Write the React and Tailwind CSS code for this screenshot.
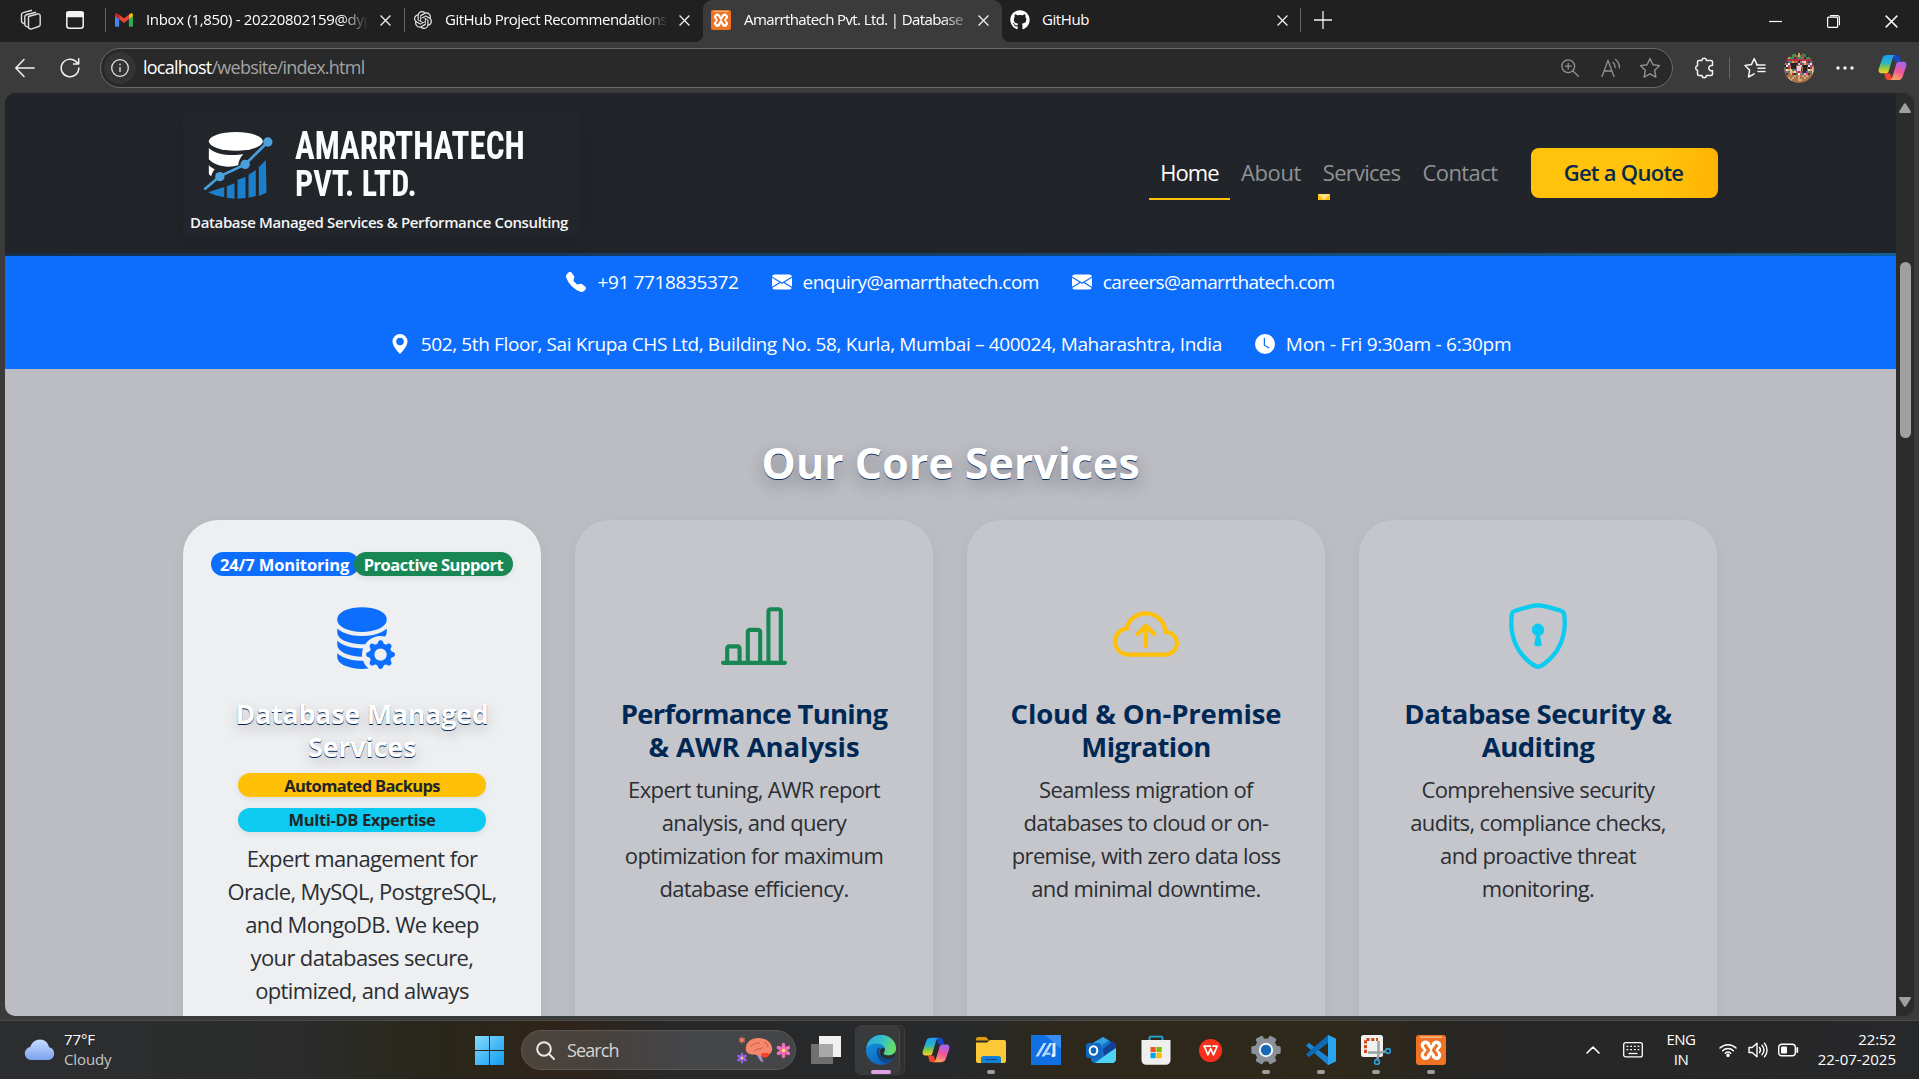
import React from 'react';
import {
  BsDatabaseFillGear,
  BsBarChartLine,
  BsCloudArrowUp,
  BsShieldLock,
  BsTelephoneFill,
  BsEnvelopeFill,
  BsGeoAltFill,
  BsClockFill,
} from 'react-icons/bs';
import { FaGithub } from 'react-icons/fa';
import { SiOpenai } from 'react-icons/si';

/* ---------- shared drawings ---------- */

function CloseX({ className = 'size-[11px]' }) {
  return (
    <svg viewBox="0 0 12 12" className={className} fill="none" stroke="#f2f2f2" strokeWidth="1.4">
      <path d="M.6.6l10.8 10.8M11.4.6L.6 11.4" />
    </svg>
  );
}

function Xampp({ className }) {
  return (
    <svg viewBox="0 0 30 30" className={className}>
      <rect width="30" height="30" rx="3" fill="#ee7324" />
      <path d="M4 2.2h22" stroke="#f9b585" strokeWidth="1.6" />
      <g fill="none" strokeLinecap="round">
        <path d="M9.5 10.3L20.5 20.3M20.5 10.3L9.5 20.3" stroke="#fff" strokeWidth="9.6" />
        <path d="M9.6 10.5v.6l3 4-3 4v.8M20.4 10.5v.6l-3 4 3 4v.8" stroke="#ee7324" strokeWidth="3.2" strokeLinejoin="round" />
        <path d="M15 4.5v5M15 21v5" stroke="#ee7324" strokeWidth="1.6" />
      </g>
    </svg>
  );
}

function Copilot({ className, id }) {
  return (
    <svg viewBox="0 0 30 30" className={className}>
      <defs>
        <linearGradient id={id + 'a'} x1="0" y1="0" x2="0" y2="1">
          <stop offset="0" stopColor="#1b9bf0" />
          <stop offset=".45" stopColor="#2fb4c4" />
          <stop offset=".7" stopColor="#8fc93a" />
          <stop offset="1" stopColor="#ffd02e" />
        </linearGradient>
        <linearGradient id={id + 'b'} x1=".6" y1="0" x2=".3" y2="1">
          <stop offset="0" stopColor="#a463f2" />
          <stop offset=".5" stopColor="#f0569a" />
          <stop offset="1" stopColor="#ffa45c" />
        </linearGradient>
      </defs>
      <path d="M16 2h3.5c1.6 0 2.6 1 3 2.600L23.700 9h-6L15.500 3z" fill="#1747c9" />
      <path d="M14 28h-3.500c-1.600 0-2.600-1-3-2.600L6.500 21h6l2 6z" fill="#f0442e" />
      <path d="M9.500 2h8.300c-1.500.6-2.200 1.700-2.700 3.400l-4 13.200c-.5 1.700-1.500 2.400-3 2.400H4c-3 0-3.900-2.200-3.200-4.800L4.500 5.500C5.200 3.200 6.800 2 9.500 2z" fill={`url(#${id}a)`} />
      <path d="M20.500 28h-8.300c1.500-.6 2.200-1.700 2.700-3.400l4-13.200c.5-1.700 1.500-2.400 3-2.400H26c3 0 3.900 2.200 3.200 4.800l-3.700 10.700c-.7 2.300-2.300 3.500-5 3.500z" fill={`url(#${id}b)`} />
    </svg>
  );
}

/* ---------- browser tab strip ---------- */

function TabDivider() {
  return <div className="h-6 w-px bg-[#666]" />;
}

function TabStrip() {
  return (
    <div className="flex h-[42px] items-start bg-[#202020]">
      <div className="flex h-10 w-[105px] items-center gap-6 pl-5">
        <svg viewBox="0 0 22 22" className="size-[22px]" fill="none" stroke="#dedede" strokeWidth="1.4" strokeLinejoin="round">
          <path d="M8.500 7.500l9-2.500c1.600-.4 2.700.4 2.700 2v8.500c0 1-.5 1.700-1.500 2l-7 2.400c-1.700.5-3.200-.4-3.200-2z" />
          <path d="M8.500 18.500l-2.700-1.400c-.8-.5-1-1-1-1.800V8c0-1.200.6-2 1.700-2.300L16 3.200" />
          <path d="M5 15.200l-2.500-1.400c-.8-.4-1-1-1-1.700V5.800c0-1.200.6-1.900 1.700-2.200L12 1.200" />
        </svg>
        <svg viewBox="0 0 18 18" className="size-[18px]" fill="none" stroke="#f2f2f2" strokeWidth="1.500">
          <rect x=".8" y=".8" width="16.400" height="16.400" rx="2.500" />
          <path d="M1 1.500h16v4H1z" fill="#f2f2f2" />
        </svg>
      </div>
      <div className="flex h-10 items-center">
        <TabDivider />
        <div className="flex w-[298px] items-center pl-[9px]">
          <svg viewBox="0 0 24 18" className="h-[14px] w-[18px] shrink-0">
            <path d="M0 3v13.500C0 17.300.7 18 1.500 18H5.500V7z" fill="#4285f4" />
            <path d="M24 3v13.500c0 .8-.7 1.500-1.500 1.500H18.500V7z" fill="#34a853" />
            <path d="M18.500 2v6L24 3.500V2.200C24 .3 21.800-.6 20.300.5z" fill="#fbbc04" />
            <path d="M5.500 8V2L12 6.800 18.500 2v6L12 13z" fill="#ea4335" />
            <path d="M0 2.200v1.500L5.500 8V2L3.700.5C2.200-.6 0 .3 0 2.200z" fill="#c5221f" />
          </svg>
          <div className="ml-[13px] w-[222px] overflow-hidden pb-0.5 text-[15px] whitespace-nowrap tracking-[-0.022em] text-white [mask-image:linear-gradient(to_right,black_88%,transparent)]">
            Inbox (1,850) - 20220802159@dyp
          </div>
          <CloseX className="ml-3 size-[11px]" />
        </div>
        <TabDivider />
        <div className="flex w-[298px] items-center pl-[9px]">
          <SiOpenai className="size-[18px] shrink-0 text-[#e8e8e8]" />
          <div className="ml-[13px] w-[223px] overflow-hidden pb-0.5 text-[15px] whitespace-nowrap tracking-[-0.0345em] text-white [mask-image:linear-gradient(to_right,black_88%,transparent)]">
            GitHub Project Recommendations
          </div>
          <CloseX className="ml-[11px] size-[11px]" />
        </div>
      </div>
      <div className="relative flex h-[42px] w-[299px] items-center rounded-t-[9px] bg-[#3b3b3b] pb-0.5 pl-2">
        <div className="absolute bottom-0 -left-2 size-2 bg-[radial-gradient(circle_at_0_0,#202020_8px,#3b3b3b_8px)]" />
        <div className="absolute -right-2 bottom-0 size-2 bg-[radial-gradient(circle_at_100%_0,#202020_8px,#3b3b3b_8px)]" />
        <Xampp className="size-5 shrink-0" />
        <div className="ml-[13px] w-[220px] overflow-hidden pb-0.5 text-[15px] whitespace-nowrap tracking-[-0.0404em] text-white [mask-image:linear-gradient(to_right,black_90%,rgba(0,0,0,0.3))]">
          Amarrthatech Pvt. Ltd. | Database
        </div>
        <CloseX className="ml-[14px] size-[11px]" />
      </div>
      <div className="flex h-10 items-center">
        <div className="flex w-[298px] items-center pl-2">
          <FaGithub className="size-5 shrink-0 text-white" />
          <div className="ml-3 w-[235px] pb-0.5 text-[15px] tracking-[-0.0278em] text-white">GitHub</div>
          <CloseX className="size-[11px]" />
        </div>
        <TabDivider />
        <svg viewBox="0 0 18 18" className="ml-[13px] size-[18px]" stroke="#f2f2f2" strokeWidth="1.300">
          <path d="M9 0v18M0 9h18" />
        </svg>
      </div>
      <div className="mr-[21px] ml-auto flex h-[42px] items-center gap-[45px]">
        <svg viewBox="0 0 13 13" className="size-[13px]" stroke="#fff" strokeWidth="1.200">
          <path d="M0 6.500h13" />
        </svg>
        <svg viewBox="0 0 13 13" className="size-[13px]" fill="none" stroke="#fff" strokeWidth="1.200">
          <rect x=".6" y="2.200" width="10" height="10.200" rx="1" />
          <path d="M3 .6h7.400c1.200 0 2 .8 2 2v7.600" />
        </svg>
        <CloseX className="size-[13px]" />
      </div>
    </div>
  );
}

/* ---------- browser toolbar ---------- */

const speckColors = ['#3f8f56', '#d8486a', '#32242c', '#dcc0bf', '#b52f45', '#6a60b8', '#e0a73c', '#a8744e', '#8f6f62', '#f0e3dc', '#5a2f3a'];

function Avatar() {
  const cells = [];
  for (let y = 0; y < 15; y += 1) {
    for (let x = 0; x < 15; x += 1) {
      const n = (x * 37 + y * 61 + x * y * 17 + y * y * 7) % 11;
      const fill = y < 3 && n % 2 ? '#3f8f56' : y > 10 ? (n % 3 ? '#a8744e' : '#d9a878') : speckColors[n];
      cells.push(<rect key={x + '-' + y} x={x * 2} y={y * 2} width="2.100" height="2.100" fill={fill} />);
    }
  }
  return (
    <svg viewBox="0 0 30 30" className="ml-[18px] size-[30px] shrink-0">
      <defs>
        <clipPath id="face">
          <circle cx="15" cy="15" r="15" />
        </clipPath>
      </defs>
      <g clipPath="url(#face)">
        {cells}
        <path d="M7 10h5v6H7zM19 12h4v6h-4z" fill="#2b1f26" />
        <path d="M13 13h4v5h-4z" fill="#e6cfcd" />
      </g>
    </svg>
  );
}

function Toolbar() {
  return (
    <div className="flex h-[51px] items-center bg-[#3b3b3b] pl-[15px]">
      <svg viewBox="0 0 20 20" className="size-5 shrink-0" fill="none" stroke="#f2f2f2" strokeWidth="1.500" strokeLinecap="round" strokeLinejoin="round">
        <path d="M19.200 10H.8M9 1.500L.8 10 9 18.500" />
      </svg>
      <svg viewBox="0 0 20 20" className="ml-[25px] size-5 shrink-0" fill="none" stroke="#f2f2f2" strokeWidth="1.500" strokeLinecap="round" strokeLinejoin="round">
        <path d="M18.800 10a8.800 8.800 0 1 1-3-6.600L18.500 6M18.700.8V6h-5.200" />
      </svg>
      <div className="ml-5 flex h-10 w-[1573px] shrink-0 items-center rounded-full border border-[#6a6a6a] bg-[#292929] pr-[11px] pl-[3px]">
        <div className="flex size-8 items-center justify-center rounded-full bg-[#343434]">
          <svg viewBox="0 0 18 18" className="size-[18px]" fill="none" stroke="#e6e6e6" strokeWidth="1.300">
            <circle cx="9" cy="9" r="8.300" />
            <path d="M9 8v5M9 4.800v1.500" />
          </svg>
        </div>
        <div className="ml-[7px] text-[18px] tracking-[-0.0425em] text-[#a3a3a3]">
          <span className="text-white">localhost</span>/website/index.html
        </div>
        <div className="ml-auto flex items-center text-[#929292]">
          <svg viewBox="0 0 18 18" className="size-[18px]" fill="none" stroke="currentColor" strokeWidth="1.300" strokeLinecap="round">
            <circle cx="7.200" cy="7.200" r="6.400" />
            <path d="M12 12l5.300 5.300M7.200 4.200v6M4.200 7.200h6" />
          </svg>
          <svg viewBox="0 0 20 20" className="ml-[22px] size-5" fill="none" stroke="currentColor" strokeWidth="1.300" strokeLinecap="round">
            <path d="M1 18.500L7 2.500l6 16M3.200 13h7.600M12 4.500c1.500 1.200 2.300 3 2.300 5M14.500 1.500c2.600 2 4 5 4 8.300" />
          </svg>
          <svg viewBox="0 0 22 22" className="ml-[18px] size-[22px]" fill="none" stroke="currentColor" strokeWidth="1.400" strokeLinejoin="round">
            <path d="M11 1.500l2.900 6.200 6.700.9-4.900 4.700 1.200 6.800L11 16.800l-5.900 3.300 1.200-6.800L1.400 8.600l6.700-.9z" />
          </svg>
        </div>
      </div>
      <svg viewBox="0 0 20 22" className="ml-[21px] h-[22px] w-5 shrink-0" fill="none" stroke="#f2f2f2" strokeWidth="1.500" strokeLinejoin="round">
        <path d="M8 3.500a2.200 2.200 0 0 1 4.400 0H17a1.500 1.500 0 0 1 1.500 1.500v3.600a2.700 2.700 0 1 0 0 5V17a1.500 1.500 0 0 1-1.500 1.500h-4.600a2.200 2.200 0 0 1-4.400 0H5A1.500 1.500 0 0 1 3.500 17v-3.800a2.300 2.300 0 0 1 0-4.500V5A1.500 1.500 0 0 1 5 3.500z" />
      </svg>
      <div className="ml-[15px] h-[22px] w-px bg-[#666]" />
      <svg viewBox="0 0 22 22" className="ml-[14px] size-[22px] shrink-0" fill="none" stroke="#f2f2f2" strokeWidth="1.500" strokeLinejoin="round" strokeLinecap="round">
        <path d="M14 7.800l-1-.2-2.800-6-2.800 6-6.400.9 4.600 4.600L4.500 20l5.700-3.200M12.500 8h8.500M14 11.300h7M14 14.500h7" />
      </svg>
      <Avatar />
      <svg viewBox="0 0 20 4" className="ml-[21px] h-1 w-5 shrink-0" fill="#f2f2f2">
        <circle cx="3" cy="2" r="1.700" />
        <circle cx="10" cy="2" r="1.700" />
        <circle cx="17" cy="2" r="1.700" />
      </svg>
      <Copilot id="cpTop" className="ml-[23px] size-[29px] shrink-0" />
    </div>
  );
}

/* ---------- site header ---------- */

function Logo() {
  return (
    <div className="h-[125px] w-[398px] rounded bg-[#22252a] pt-[16px] shadow-[0_4px_18px_rgba(0,0,0,0.14)]">
      <div className="flex h-[74px] pl-5">
        <svg viewBox="98 106 212 210" className="mt-[3px] h-[70px] w-[71px] shrink-0">
          <ellipse cx="196" cy="140" rx="81" ry="28" fill="#fff" />
          <path d="M115 160c22 24 78 24 104 18-10 10-14 20-16 34-36 10-72 0-88-18z" fill="#fff" />
          <path d="M115 211c5 6 11 10 18 13-6 6-9 12-11 21-4-3-7-6-7-10z" fill="#fff" />
          <g fill="#1c7fcb">
            <path d="M113 293l48-16v31c-20-3-36-8-48-15z" />
            <path d="M169 275l23-9v46l-23-3z" />
            <path d="M201 255l24-8v63l-24 2z" />
            <path d="M234 240l22-14v78l-22 5z" />
            <path d="M265 218l21-22 2 98-23 10z" />
          </g>
          <path d="M104 282l44-37 76-36 68-67" fill="none" stroke="#4aa0dd" strokeWidth="8" strokeLinecap="round" />
          <g fill="#4aa0dd">
            <circle cx="148" cy="246" r="14" />
            <circle cx="224" cy="209" r="14" />
            <circle cx="292" cy="142" r="14" />
          </g>
        </svg>
        <div className="ml-[21px] font-['Roboto_Condensed'] font-bold whitespace-nowrap text-[#fafcfd]">
          <div className="h-[37px] w-fit origin-left scale-x-[0.835] text-[39.500px] leading-[37px]">AMARRTHATECH</div>
          <div className="h-[37px] w-fit origin-left scale-x-[0.89] text-[36px] leading-[40px]">PVT. LTD.</div>
        </div>
      </div>
      <div className="mt-[10px] pl-[7px] text-[15px] leading-[22px] font-semibold tracking-[-0.024em] whitespace-nowrap text-[#f4f6f7]">
        Database Managed Services &amp; Performance Consulting
      </div>
    </div>
  );
}

function SiteHeader() {
  return (
    <header className="flex h-[163px] items-center border-b-[3px] border-[#134473] bg-[#212529] pr-[178px] pl-[178px] [border-image:linear-gradient(to_right,#15304f,#12406f_50%,#105f98)_1]">
      <Logo />
      <nav className="ml-auto flex items-center text-[22px] leading-[33px] text-[#909294]">
        <div className="flex h-[54px] w-[81px] items-center justify-center border-b-2 border-[#ffc107] tracking-[-0.04em] text-white">Home</div>
        <div className="w-[82px] pb-0.5 text-center tracking-[-0.018em]">About</div>
        <div className="relative w-[99px] pb-0.5 text-center tracking-[-0.034em]">
          Services
          <svg viewBox="0 0 12 6" className="absolute top-[38px] left-[6px] h-1.5 w-3">
            <path d="M0 0h12v6H0z" fill="#ffc107" />
            <path d="M0 0h12L6 6z" fill="#ffe083" />
          </svg>
        </div>
        <div className="w-[98px] pb-0.5 text-center tracking-[-0.026em]">Contact</div>
      </nav>
      <button className="ml-[22px] h-[50px] w-[187px] rounded-[8px] bg-[linear-gradient(100deg,#ffc30b_65%,#ffb300)] pr-0.5 pb-0.5 text-[22px] font-semibold tracking-[-0.033em] text-[#0a2a4d]">
        Get a Quote
      </button>
    </header>
  );
}

function ContactItem({ icon: Icon, children, className }) {
  return (
    <div className="flex items-center">
      <Icon className="mr-[11px] size-5 shrink-0 -translate-y-px" />
      <span className={className}>{children}</span>
    </div>
  );
}

function ContactBar() {
  return (
    <div className="flex h-[113px] flex-col items-center bg-[#0d6efd] pt-3 text-[19px] whitespace-nowrap text-white">
      <div className="flex h-[29px] items-center gap-[33px]">
        <ContactItem icon={BsTelephoneFill} className="tracking-[-0.019em]">+91 7718835372</ContactItem>
        <ContactItem icon={BsEnvelopeFill} className="tracking-[-0.0285em]">enquiry@amarrthatech.com</ContactItem>
        <ContactItem icon={BsEnvelopeFill} className="tracking-[-0.034em]">careers@amarrthatech.com</ContactItem>
      </div>
      <div className="mt-[33px] flex h-[29px] items-center gap-[33px]">
        <ContactItem icon={BsGeoAltFill} className="tracking-[-0.0195em]">
          502, 5th Floor, Sai Krupa CHS Ltd, Building No. 58, Kurla, Mumbai – 400024, Maharashtra, India
        </ContactItem>
        <ContactItem icon={BsClockFill} className="tracking-[-0.0137em]">Mon - Fri 9:30am - 6:30pm</ContactItem>
      </div>
    </div>
  );
}

/* ---------- services ---------- */

function Lines({ lines, className }) {
  return (
    <div className={className}>
      {lines.map(([text, tracking]) => (
        <div key={text} className={tracking}>{text}</div>
      ))}
    </div>
  );
}

const services = [
  {
    icon: BsBarChartLine,
    color: 'text-[#198754]',
    title: [['Performance Tuning', 'tracking-[-0.0263em]'], ['& AWR Analysis', 'tracking-[-0.0026em]']],
    body: ['Expert tuning, AWR report', 'analysis, and query', 'optimization for maximum', 'database efficiency.'],
  },
  {
    icon: BsCloudArrowUp,
    color: 'text-[#ffc107]',
    title: [['Cloud & On-Premise', 'tracking-[-0.0051em]'], ['Migration', 'tracking-[-0.02em]']],
    body: ['Seamless migration of', 'databases to cloud or on-', 'premise, with zero data loss', 'and minimal downtime.'],
  },
  {
    icon: BsShieldLock,
    color: 'text-[#0dcaf0]',
    title: [['Database Security &', 'tracking-[-0.0172em]'], ['Auditing', 'tracking-[-0.02em]']],
    body: ['Comprehensive security', 'audits, compliance checks,', 'and proactive threat', 'monitoring.'],
  },
];

const bodyClass = 'text-[22px] leading-[33px] tracking-[-0.029em] text-[#2b2e33]';

function FeaturedCard() {
  return (
    <article className="relative h-[700px] w-[358px] shrink-0 rounded-[35px] bg-[#edeff1] pt-[83px] text-center whitespace-nowrap shadow-[0_4px_16px_rgba(0,0,0,0.05)]">
      <div className="absolute top-8 left-7 h-6 w-[148px] rounded-full bg-[#0d6efd] pl-[9px] text-left text-[16.500px] leading-[25px] font-bold tracking-[-0.0081em] text-white">
        24/7 Monitoring
      </div>
      <div className="absolute top-8 right-7 h-6 w-[159px] rounded-full bg-[#198754] text-[16.500px] leading-[25px] font-bold tracking-[-0.0296em] text-white shadow-[0_2px_6px_rgba(0,0,0,0.08)]">
        Proactive Support
      </div>
      <BsDatabaseFillGear className="mx-auto size-[66px] text-[#0d6efd]" />
      <Lines
        className="mt-7 text-[27px] leading-[33px] font-bold text-white [text-shadow:0_1px_0_#002855,0_5px_14px_rgba(40,30,50,0.22)]"
        lines={[['Database Managed', 'tracking-[-0.012em]'], ['Services', 'tracking-[-0.008em]']]}
      />
      <div className="mx-auto mt-[10px] h-6 w-[248px] rounded-full bg-[#ffc107] text-[16.500px] leading-[26px] font-bold tracking-[-0.0392em] text-[#212529] shadow-[0_2px_6px_rgba(0,0,0,0.08)]">
        Automated Backups
      </div>
      <div className="mx-auto mt-[11px] h-6 w-[248px] rounded-full bg-[#0dcaf0] text-[16.500px] leading-6 font-bold tracking-[-0.0212em] text-[#212529] shadow-[0_2px_6px_rgba(0,0,0,0.08)]">
        Multi-DB Expertise
      </div>
      <Lines
        className={bodyClass + ' mt-[10px]'}
        lines={[
          ['Expert management for'],
          ['Oracle, MySQL, PostgreSQL,'],
          ['and MongoDB. We keep'],
          ['your databases secure,'],
          ['optimized, and always'],
          ['available.'],
        ]}
      />
    </article>
  );
}

function ServiceCard({ icon: Icon, color, title, body }) {
  return (
    <article className="h-[700px] w-[358px] shrink-0 rounded-[35px] bg-[#c5c6cb] pt-[83px] text-center whitespace-nowrap shadow-[0_4px_16px_rgba(0,0,0,0.04)]">
      <Icon className={'mx-auto size-[66px] ' + color} />
      <Lines className="mt-7 text-[27.500px] leading-[33px] font-bold text-[#002855]" lines={title} />
      <Lines className={bodyClass + ' mt-[10px]'} lines={body.map((line) => [line])} />
    </article>
  );
}

function Services() {
  return (
    <section className="h-[647px] overflow-hidden bg-[#bcbdc3]">
      <h2 className="mt-[66px] text-center text-[43.500px] leading-[56px] font-bold tracking-[-0.006em] text-white [text-shadow:0_1px_0_#0d2f5c,0_6px_16px_rgba(30,30,50,0.3)]">
        Our Core Services
      </h2>
      <div className="mt-[29px] flex gap-[34px] pl-[178px]">
        <FeaturedCard />
        {services.map((service) => (
          <ServiceCard key={service.title[0][0]} {...service} />
        ))}
      </div>
    </section>
  );
}

function Scrollbar() {
  return (
    <div className="flex w-[18px] shrink-0 flex-col items-center bg-[#2c2c2c] pt-[10px] pb-[9px]">
      <svg viewBox="0 0 12 10" className="h-[10px] w-3" fill="#a0a0a0">
        <path d="M5 .8Q6-.4 7 .8l4.700 7.400Q12.400 10 11 10H1Q-.4 10 .3 8.200z" />
      </svg>
      <div className="mt-[149px] h-[176px] w-[11px] rounded-full bg-[#a0a0a0]" />
      <svg viewBox="0 0 12 10" className="mt-auto h-[10px] w-3 rotate-180" fill="#a0a0a0">
        <path d="M5 .8Q6-.4 7 .8l4.700 7.400Q12.400 10 11 10H1Q-.4 10 .3 8.200z" />
      </svg>
    </div>
  );
}

/* ---------- taskbar ---------- */

function Brain() {
  const petals = [0, 60, 120, 180, 240, 300];
  const flower = (x, y, r, fill) => (
    <g transform={`translate(${x} ${y})`}>
      {petals.map((a) => (
        <ellipse key={a} cx="0" cy={-r * 0.6} rx={r * 0.27} ry={r * 0.5} fill={fill} transform={`rotate(${a})`} />
      ))}
      <circle r={r * 0.24} fill="#ffe14d" />
    </g>
  );
  return (
    <svg viewBox="0 0 54 30" className="h-[30px] w-[54px] shrink-0">
      <path d="M20 19l5 1 2.500 7.500-3-1.500z" fill="#a68bd6" />
      <path d="M10 12C11 5 19 2 26 3.500c7 1 11 7 10 12-.8 4-5 4.500-9 4.500-3 1.500-6 0-9-.5-6 0-9-3-8-7.500z" fill="#f4876c" />
      <path d="M14 11c4-1 6-4 10-3M18 16c3-3 7-1 9-4M28 7c3 1 4 3 4 6" fill="none" stroke="#cf5a48" strokeWidth="1" />
      <path d="M25 19c3-2 8-1.500 8 1s-4 3.500-7 2z" fill="#f0432a" />
      {flower(47.500, 15.500, 7, '#f06fbd')}
      {flower(6, 23, 5, '#9a63e6')}
      {flower(6, 5, 3.200, '#e8705c')}
    </svg>
  );
}

function TaskIcon({ children, running, active }) {
  return (
    <div className={'flex h-full w-[55px] shrink-0 flex-col items-center pt-[14px] ' + (active ? 'relative' : '')}>
      {active && (
        <div className="absolute top-1 left-[2px] h-[50px] w-[50px] rounded-md border border-[#3d3d3e] bg-[#2f3031]">
          <div className="h-[48px] w-[44px] rounded-md border-r border-[#454546] bg-[#393a3c]" />
        </div>
      )}
      <div className="relative flex size-[30px] items-center justify-center">{children}</div>
      {running && <div className="mt-[5px] h-1 w-2 rounded-full bg-[#a09e9a]" />}
      {active && <div className="relative mt-[5px] h-1 w-5 rounded-full bg-[#dda2e4]" />}
    </div>
  );
}

function Edge() {
  return (
    <svg viewBox="0 0 30 30" className="size-[30px]">
      <defs>
        <linearGradient id="edgeTop" x1="0" y1=".3" x2="1" y2=".6">
          <stop offset="0" stopColor="#2aa7e0" />
          <stop offset=".5" stopColor="#35c3c4" />
          <stop offset="1" stopColor="#6be05b" />
        </linearGradient>
        <linearGradient id="edgeLow" x1="0" y1="0" x2=".6" y2="1">
          <stop offset="0" stopColor="#1a9bdc" />
          <stop offset="1" stopColor="#0a62c0" />
        </linearGradient>
      </defs>
      <circle cx="15" cy="15" r="15" fill="url(#edgeLow)" />
      <path d="M.3 13C1.500 5.500 7.600 0 15.200 0 23.600 0 30 6 30 13c0 4.800-3.600 7.500-7.600 7.500-3.200 0-5-1-5-2.200 0-1 1.400-1.500 1.400-3.900 0-3.200-3.200-5.900-7.800-5.900C6.500 8.500 2.300 10.200.3 13z" fill="url(#edgeTop)" />
      <path d="M11.500 13.500c-2.600 6 1.700 14.300 9.500 15 2.700-1 5.300-3 6.900-5.700.3-.6-.2-.9-.7-.6-6.700 3-12.900.2-13.800-4.200-.4-2 .1-3.500.8-4.800-1-.7-2.100-.5-2.700.3z" fill="#114a8b" />
      <path d="M17.500 18.300c0 1.300 1.800 2.200 5 2.200 3 0 5.500-1.400 6.800-3.800.3 2.300-.2 4-1.200 5.900-5.600 3-13.500.8-14.200-4.900-.3-2 .3-3.300 1.200-4.300 2-1.300 4-.2 3.800 1.400-.1 2-1.400 2.500-1.400 3.500z" fill="#2b2d2f" />
    </svg>
  );
}

function Taskbar() {
  return (
    <div className="flex h-[59px] items-center overflow-hidden border-t border-[#4b4b4a] bg-[linear-gradient(to_right,#2c2e31_0,#2b2c2b_300px,#29271a_440px,#302419_560px,#26282a_680px,#27292b_960px,#2e281c_1060px,#2f291b_1340px,#272625_1480px,#27282a_1919px)]">
      <div className="flex w-[475px] shrink-0 items-center pl-[24px]">
        <svg viewBox="0 0 31 22" className="h-[22px] w-[31px]">
          <defs>
            <linearGradient id="cloud" x1="0" y1="0" x2="0" y2="1">
              <stop offset="0" stopColor="#c7dcff" />
              <stop offset="1" stopColor="#7ba4ee" />
            </linearGradient>
          </defs>
          <path d="M7 21a6.500 6.500 0 0 1-.8-12.900C7.500 3.500 11.500.5 16 .5c4.600 0 8.400 3.300 9 7.700A6.500 6.500 0 0 1 24.500 21z" fill="url(#cloud)" />
        </svg>
        <div className="ml-[9px] pb-0.5 text-[15px] leading-5 tracking-[-0.008em] text-white">
          <div>77°F</div>
          <div className="text-[#c4c5c6]">Cloudy</div>
        </div>
      </div>
      <svg viewBox="0 0 29 29" className="size-[29px] shrink-0">
        <defs>
          <linearGradient id="win" gradientUnits="userSpaceOnUse" x1="0" y1="0" x2="29" y2="29">
            <stop offset="0" stopColor="#84dcfb" />
            <stop offset="1" stopColor="#0f9bf2" />
          </linearGradient>
        </defs>
        <path d="M0 0h14v14H0zM15 0h14v14H15zM0 15h14v14H0zM15 15h14v14H15z" fill="url(#win)" />
      </svg>
      <div className="ml-[17px] flex h-10 w-[275px] shrink-0 items-center rounded-full border border-[#5c5955] bg-[linear-gradient(to_right,#4c443c,#47413d_30%,#444648_60%,#434547)] pr-[5px] pl-[14px]">
        <svg viewBox="0 0 19 19" className="size-[19px]" fill="none" stroke="#e8e8e8" strokeWidth="2" strokeLinecap="round">
          <circle cx="8" cy="8" r="6.800" />
          <path d="M13 13l5 5" />
        </svg>
        <span className="ml-3 text-[18px] tracking-[-0.05em] text-[#d6d6d6]">Search</span>
        <div className="ml-auto"><Brain /></div>
      </div>
      <div className="ml-[2px] flex h-full">
        <TaskIcon>
          <svg viewBox="0 0 30 30" className="size-[30px]">
            <path d="M8 1h22v21H8z" fill="#f1f1f1" />
            <path d="M0 9h22v20H0z" fill="#6f6f6f" />
            <path d="M8 9h14v13H8z" fill="#a9a9a9" />
          </svg>
        </TaskIcon>
        <TaskIcon active><Edge /></TaskIcon>
        <TaskIcon><Copilot id="cpTask" className="size-[28px]" /></TaskIcon>
        <TaskIcon running>
          <svg viewBox="0 0 30 30" className="size-[30px]">
            <path d="M0 4c0-1 .6-2 2-2h8l3 3.500H0z" fill="#e09a10" />
            <path d="M0 7.500h11L14 5h14c1.200 0 2 .8 2 2v19c0 1.200-.8 2-2 2H2c-1.200 0-2-.8-2-2z" fill="#fdc835" />
            <path d="M5 28v-4.500C5 22 6 21 7.500 21h15c1.500 0 2.500 1 2.500 2.500V28z" fill="#1480d8" />
            <path d="M9 24.500h12" stroke="#0b4f8f" strokeWidth="1.200" />
          </svg>
        </TaskIcon>
        <TaskIcon>
          <svg viewBox="0 0 30 30" className="size-[30px]">
            <path d="M0 0h30v30H0z" fill="#1070e2" />
            <path d="M14 0h16v14z" fill="#3a8df0" />
            <path d="M4.500 21.500L12.500 8h3L7.500 21.500zM10.500 21.500L18.500 8h3L13.500 21.500z" fill="#b9dcff" />
            <path d="M21.500 8h3v13.500h-3z" fill="#d9ecff" />
            <path d="M15.500 17.500h4v2.500h-5.300z" fill="#9fccff" />
            <circle cx="22" cy="20.500" r="1.500" fill="#fff" />
          </svg>
        </TaskIcon>
        <TaskIcon>
          <svg viewBox="0 0 30 30" className="size-[30px]">
            <path d="M5 10L17 2l13 8v14c0 2-1.500 4-4 4H9c-2.500 0-4-2-4-4z" fill="#1672c9" />
            <path d="M17 14L27 6l3 4v4L18 22z" fill="#123f98" />
            <path d="M5 9L17 2l6 3.500L10 14z" fill="#2f9fe6" />
            <path d="M30 13v11c0 2-1.500 4-4 4H9l12-9z" fill="#4fd3f3" />
            <rect y="8" width="15" height="15" rx="2.500" fill="#0f66bd" />
            <ellipse cx="7.500" cy="15.500" rx="3.800" ry="4.300" fill="none" stroke="#fff" strokeWidth="2" />
          </svg>
        </TaskIcon>
        <TaskIcon>
          <svg viewBox="0 0 30 30" className="size-[30px]">
            <path d="M8.500 6V3c0-.8.500-1.300 1.300-1.300h10.400c.8 0 1.300.5 1.300 1.300v3" fill="none" stroke="#25a7dd" strokeWidth="1.800" />
            <path d="M.5 5h29v20c0 2.800-2 4.800-4.800 4.800H5.300C2.500 29.800.5 27.800.5 25z" fill="#efeff0" />
            <path d="M9.500 12h5.200v5.200H9.500z" fill="#f25022" />
            <path d="M15.500 12h5.200v5.200h-5.200z" fill="#7fba00" />
            <path d="M9.500 18h5.200v5.200H9.500z" fill="#00a4ef" />
            <path d="M15.500 18h5.200v5.200h-5.200z" fill="#ffb900" />
          </svg>
        </TaskIcon>
        <TaskIcon>
          <svg viewBox="0 0 24 24" className="size-[23px]">
            <circle cx="12" cy="12" r="12" fill="#f7301d" />
            <path d="M5 7.500h7M5.500 7.500l3.800 9 2.900-6.500 2.900 6.500 3.900-9h-4.500" fill="none" stroke="#fff" strokeWidth="1.700" strokeLinejoin="round" strokeLinecap="round" />
          </svg>
        </TaskIcon>
        <TaskIcon running>
          <svg viewBox="0 0 30 30" className="size-[30px]">
            <g fill="#8a919b">
              <circle cx="15" cy="15" r="11.500" />
              {[0, 60, 120].map((angle) => (
                <rect key={angle} x="11" y="0.300" width="8" height="29.400" rx="1.800" transform={`rotate(${angle + 30} 15 15)`} />
              ))}
            </g>
            <circle cx="15" cy="15" r="7.200" fill="#f2f4f6" />
            <circle cx="15" cy="15" r="5.200" fill="#1568b8" />
          </svg>
        </TaskIcon>
        <TaskIcon running>
          <svg viewBox="0 0 30 30" className="size-[30px]">
            <path d="M22 0l8 3.500v23L22 30 .8 11.500c-.6-.6-.6-1.300 0-1.800l1.400-1.300c.5-.4 1.100-.4 1.600 0L22 22z" fill="#1b83cf" />
            <path d="M22 0v8L3.800 21.600c-.5.4-1.100.4-1.600 0L.8 20.300c-.6-.5-.6-1.200 0-1.800z" fill="#0d6ab5" />
            <path d="M22 0l6.800 3.200c.8.400 1.200 1 1.200 1.900v19.800c0 .9-.4 1.500-1.200 1.900L22 30z" fill="#2ba4ee" />
          </svg>
        </TaskIcon>
        <TaskIcon running>
          <svg viewBox="0 0 30 30" className="size-[30px]">
            <rect width="22" height="22" rx="2.500" fill="#f1f1f2" />
            <path d="M4.500 18V4.500H17" fill="none" stroke="#d64a20" strokeWidth="3" strokeDasharray="3.200 1.600" />
            <path d="M17.500 6v13l-1 5M7 17.500h13l4-1" fill="none" stroke="#9a9fa5" strokeWidth="2.400" />
            <circle cx="16" cy="27" r="2.400" fill="none" stroke="#2b9fe0" strokeWidth="1.700" />
            <circle cx="27" cy="16" r="2.400" fill="none" stroke="#2b9fe0" strokeWidth="1.700" />
          </svg>
        </TaskIcon>
        <TaskIcon running><Xampp className="size-[30px]" /></TaskIcon>
      </div>
      <div className="mr-[23px] ml-auto flex items-center text-[15px] leading-5 whitespace-nowrap text-white">
        <svg viewBox="0 0 14 8" className="h-2 w-[14px]" fill="none" stroke="#fff" strokeWidth="1.600" strokeLinecap="round" strokeLinejoin="round">
          <path d="M1 7l6-6 6 6" />
        </svg>
        <svg viewBox="0 0 20 16" className="ml-[23px] h-4 w-5" fill="none" stroke="#fff" strokeWidth="1.300">
          <rect x=".7" y=".7" width="18.600" height="14.200" rx="2" />
          <path d="M3.500 4.300h13M3.500 7.700h13" strokeDasharray="1.800 1.900" />
          <path d="M5.500 11.500h9" />
        </svg>
        <div className="ml-[23px] flex w-[30px] flex-col items-center pb-0.5 tracking-[-0.033em]">
          <div>ENG</div>
          <div>IN</div>
        </div>
        <svg viewBox="0 0 18 14" className="ml-[23px] h-[14px] w-[18px]" fill="none" stroke="#fff" strokeWidth="1.500" strokeLinecap="round">
          <path d="M1 5c4.500-4.500 11.500-4.500 16 0M3.700 7.800c3-3 7.600-3 10.600 0M6.400 10.300c1.500-1.400 3.700-1.400 5.200 0" />
          <circle cx="9" cy="12.300" r="1" fill="#fff" />
        </svg>
        <svg viewBox="0 0 20 18" className="ml-[11px] h-[18px] w-5" fill="none" stroke="#fff" strokeWidth="1.400" strokeLinecap="round" strokeLinejoin="round">
          <path d="M1 6.500h3.200L9 2.200v13.600l-4.800-4.300H1zM11.500 6.500c1.200 1.500 1.200 3.500 0 5M14 4.300c2.400 2.800 2.400 6.600 0 9.400M16.500 2.200c3.400 4 3.400 9.600 0 13.600" />
        </svg>
        <svg viewBox="0 0 21 14" className="ml-[10px] h-[14px] w-[21px]" fill="none" stroke="#fff" strokeWidth="1.400">
          <rect x=".7" y="1.200" width="16.600" height="11.600" rx="3" />
          <rect x="3" y="3.500" width="6" height="7" rx="1" fill="#fff" stroke="none" />
          <path d="M19.300 5v4" strokeLinecap="round" strokeWidth="1.800" />
        </svg>
        <div className="ml-[18px] w-[79px] pb-0.5 text-right">
          <div className="tracking-[-0.008em]">22:52</div>
          <div>22-07-2025</div>
        </div>
      </div>
    </div>
  );
}

export default function App() {
  return (
    <div className="flex h-[1079px] w-[1919px] flex-col overflow-hidden bg-[#3b3b3b] font-['Open_Sans','Noto_Sans',sans-serif]">
      <TabStrip />
      <Toolbar />
      <div className="mr-[5px] ml-[5px] flex h-[923px] shrink-0 overflow-hidden rounded-[10px]">
        <main className="w-[1891px] shrink-0">
          <SiteHeader />
          <ContactBar />
          <Services />
        </main>
        <Scrollbar />
      </div>
      <div className="h-1 shrink-0 bg-[#3a3b3b]" />
      <Taskbar />
    </div>
  );
}
